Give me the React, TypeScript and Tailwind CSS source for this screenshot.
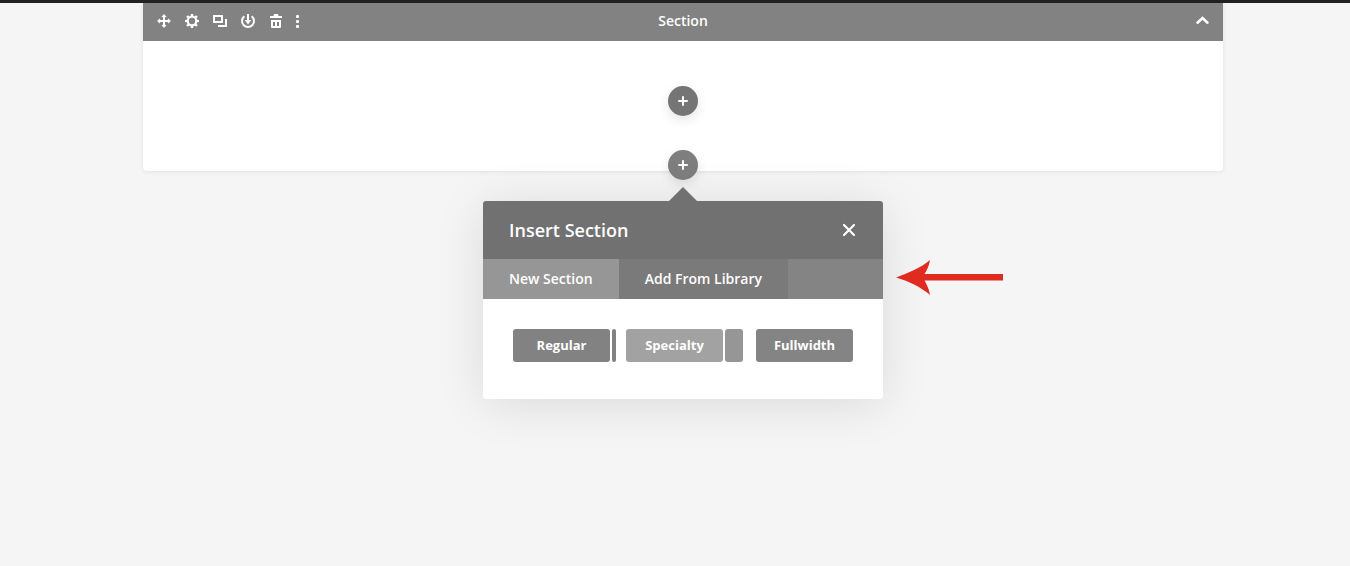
import type { ReactNode } from 'react'

const gearAngles = [0, 45, 90, 135, 180, 225, 270, 315]

const App = () => {
  return (
    <div className="min-h-screen bg-[#f5f5f5] font-['Open_Sans','Noto_Sans',sans-serif] text-white">
      <div className="h-[3px] bg-[#222222]" />
      <main className="flex flex-col items-center pl-4">
        <BuilderSection />
        <AddButton label="Add section" className="relative -mt-[21px] bg-[#7e7e7e]" />
        <InsertSection />
      </main>
    </div>
  )
}

const BuilderSection = () => {
  return (
    <section className="w-[81%] rounded-b-sm bg-white shadow-[0_1px_4px_rgba(0,0,0,0.08)]">
      <header className="grid h-[38px] grid-cols-3 items-center bg-[#828282] pb-0.5">
        <div className="flex pl-[7px]">
          <ToolButton label="Move">
            <path
              d="M14 9v10M9 14h10"
              fill="none"
              stroke="currentColor"
              strokeWidth="2"
            />
            <path
              d="M14 7.500l2 2.200h-4zM14 20.500l2-2.200h-4zM7.500 14l2.200-2v4zM20.500 14l-2.200-2v4z"
              stroke="currentColor"
              strokeWidth="0.8"
              strokeLinejoin="round"
            />
          </ToolButton>
          <ToolButton label="Settings">
            <circle cx="14" cy="14" r="4.2" fill="none" stroke="currentColor" strokeWidth="2" />
            {gearAngles.map((angle) => (
              <path
                key={angle}
                d="M12.500 9.600l.4-2.600h2.200l.4 2.600z"
                transform={`rotate(${angle} 14 14)`}
              />
            ))}
          </ToolButton>
          <ToolButton label="Duplicate">
            <path
              d="M8 9h8v6H8zM20 12v7h-8"
              fill="none"
              stroke="currentColor"
              strokeWidth="2"
            />
          </ToolButton>
          <ToolButton label="Save to library">
            <path
              d="M10.400 9.200a6 6 0 1 0 7.200 0M14 7v8"
              fill="none"
              stroke="currentColor"
              strokeWidth="2"
            />
            <path d="M10.600 13h6.800L14 17.600z" />
          </ToolButton>
          <ToolButton label="Delete">
            <path d="M8 9h3.500l.5-2h4l.5 2H20v2H8z" />
            <path
              fillRule="evenodd"
              d="M9 13h10v7a1 1 0 0 1-1 1h-8a1 1 0 0 1-1-1zM11 15v4h2v-4zM15 15v4h2v-4z"
            />
          </ToolButton>
          <button type="button" aria-label="More options" className="cursor-pointer">
            <svg className="h-7 w-3.5" viewBox="0 0 14 28" fill="currentColor">
              <rect x="6" y="8" width="3" height="3" rx="1" />
              <rect x="6" y="13" width="3" height="3" rx="1" />
              <rect x="6" y="18" width="3" height="3" rx="1" />
            </svg>
          </button>
        </div>
        <h2 className="text-center text-sm font-semibold">Section</h2>
        <button
          type="button"
          aria-label="Collapse section"
          className="mr-[7px] cursor-pointer justify-self-end"
        >
          <svg className="size-7" viewBox="0 0 28 28" fill="none">
            <path
              d="M9.500 15.700l5-4.700 5 4.700"
              stroke="currentColor"
              strokeWidth="2.600"
              strokeLinecap="round"
            />
          </svg>
        </button>
      </header>
      <div className="flex justify-center pt-[45px] pb-[55px]">
        <AddButton label="Add row" className="bg-[#757575]" />
      </div>
    </section>
  )
}

const InsertSection = () => {
  return (
    <div
      role="dialog"
      aria-labelledby="insert-title"
      className="relative mt-[21px] w-[400px] rounded-[3px] bg-white shadow-[0_5px_50px_rgba(0,0,0,0.11)]"
    >
      <svg
        className="absolute bottom-full left-1/2 h-3.5 w-7 -translate-x-1/2 text-[#717171]"
        viewBox="0 0 28 14"
        fill="currentColor"
      >
        <path d="M0 14L14 0l14 14z" />
      </svg>
      <div className="flex h-[58px] items-center justify-between rounded-t-[3px] bg-[#717171] pr-5 pl-[26px]">
        <h3 id="insert-title" className="text-lg font-semibold">
          Insert Section
        </h3>
        <button type="button" aria-label="Close" className="cursor-pointer">
          <svg className="size-7" viewBox="0 0 28 28" fill="none">
            <path
              d="M9 9l10 10M19 9L9 19"
              stroke="currentColor"
              strokeWidth="2.200"
              strokeLinecap="round"
            />
          </svg>
        </button>
      </div>
      <div role="tablist" className="flex h-10 bg-[#848484] text-sm font-semibold">
        <button
          type="button"
          role="tab"
          aria-selected="true"
          className="cursor-pointer bg-[#969696] px-[26px]"
        >
          New Section
        </button>
        <button
          type="button"
          role="tab"
          aria-selected="false"
          className="cursor-pointer bg-[#7a7a7a] px-[26px]"
        >
          Add From Library
        </button>
      </div>
      <div className="flex px-[30px] pt-[30px] pb-[37px] text-[13px] font-bold">
        <SectionType label="Regular" className="bg-[#828282]" />
        <span className="ml-0.5 w-1 rounded-sm bg-[#828282]" />
        <SectionType label="Specialty" className="ml-2.5 bg-[#a2a2a2]" />
        <span className="ml-0.5 w-[18px] rounded-[3px] bg-[#969696]" />
        <SectionType label="Fullwidth" className="ml-auto bg-[#848484]" />
      </div>
      <svg
        className="absolute top-[59px] left-full ml-[13px] h-9 w-[108px] text-[#e02b20]"
        viewBox="0 0 108 36"
        fill="currentColor"
      >
        <path d="M0 17.500C12 13 25 8 34 0c-1 6-3 10-5.500 14H107v6.500H28.500C31 25 33 29 34 35C25 27 12 21 0 17.500z" />
      </svg>
    </div>
  )
}

const ToolButton = ({ label, children }: { label: string; children: ReactNode }) => {
  return (
    <button type="button" aria-label={label} className="cursor-pointer">
      <svg className="size-7" viewBox="0 0 28 28" fill="currentColor">
        {children}
      </svg>
    </button>
  )
}

const AddButton = ({ label, className }: { label: string; className: string }) => {
  return (
    <button
      type="button"
      aria-label={label}
      className={`flex size-[30px] cursor-pointer items-center justify-center rounded-full shadow-[0_4px_12px_rgba(0,0,0,0.1)] ${className}`}
    >
      <svg className="size-2.5" viewBox="0 0 10 10" fill="none">
        <path
          d="M5 1v8M1 5h8"
          stroke="currentColor"
          strokeWidth="2"
          strokeLinecap="round"
        />
      </svg>
    </button>
  )
}

const SectionType = ({ label, className }: { label: string; className: string }) => {
  return (
    <button
      type="button"
      className={`h-[33px] w-[97px] cursor-pointer rounded-[3px] ${className}`}
    >
      {label}
    </button>
  )
}

export default App
